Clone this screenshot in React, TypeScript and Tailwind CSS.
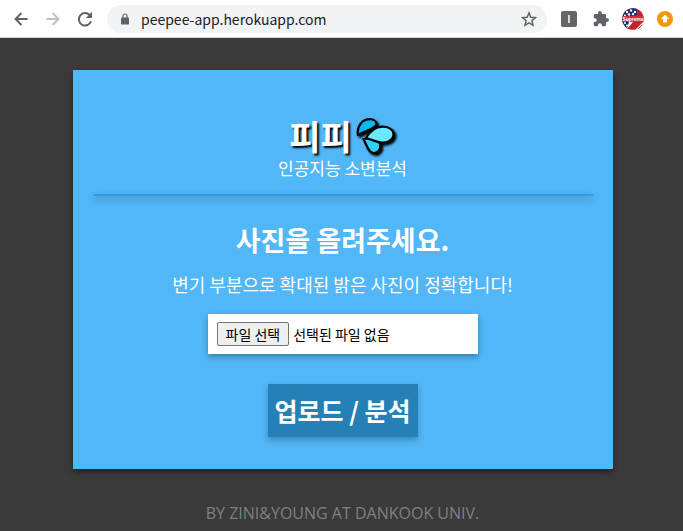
import React from 'react';

function BackIcon({ className }: { className: string }) {
  return (
    <svg viewBox="0 0 16 16" className={className} fill="none" stroke="currentColor" strokeWidth="2.200" aria-hidden="true">
      <path d="M15.500 8H2.500M8.500 1.200L1.800 8l6.700 6.800" />
    </svg>
  );
}

function BrowserBar() {
  return (
    <header className="flex h-[38px] items-center border-b border-[#d5d7da] bg-white pr-2.5 pl-3.5">
      <button type="button" aria-label="뒤로" className="shrink-0 text-[#5f6368]">
        <BackIcon className="size-3.5" />
      </button>
      <button type="button" aria-label="앞으로" disabled className="ml-[18px] shrink-0 text-[#bdc1c6]">
        <BackIcon className="size-3.5 rotate-180" />
      </button>
      <button type="button" aria-label="새로고침" className="ml-[17px] shrink-0 text-[#5f6368]">
        <svg viewBox="0 0 16 16" className="size-4" aria-hidden="true">
          <path d="M14 10.200A6.200 6.200 0 1 1 12.600 4" fill="none" stroke="currentColor" strokeWidth="2" />
          <path d="M15 .8V7H8.800z" fill="currentColor" />
        </svg>
      </button>
      <div className="ml-3.5 flex h-7 min-w-0 flex-1 items-center rounded-full bg-[#f1f3f4] pr-2.5 pl-3.5">
        <svg viewBox="0 0 8 12" className="h-3 w-2 shrink-0" aria-hidden="true">
          <path d="M2 5V3a2 2 0 0 1 4 0v2" fill="none" stroke="#5f6368" strokeWidth="1.200" />
          <rect y="4.500" width="8" height="7" rx=".8" fill="#5f6368" />
        </svg>
        <input
          type="text"
          aria-label="주소"
          defaultValue="peepee-app.herokuapp.com"
          className="ml-3 min-w-0 flex-1 bg-transparent text-sm text-[#202124] outline-none"
        />
        <button type="button" aria-label="북마크" className="shrink-0">
          <svg viewBox="0 0 24 24" className="size-4" fill="none" stroke="#5f6368" strokeWidth="2.200" aria-hidden="true">
            <path d="M12 2.800l2.700 6.500 7 .6-5.300 4.600 1.600 6.900-6-3.700-6 3.700 1.600-6.900L2.300 9.900l7-.6z" />
          </svg>
        </button>
      </div>
      <button type="button" aria-label="확장 프로그램 I" className="ml-3.5 flex size-4 shrink-0 items-center justify-center rounded-xs bg-[#666666]">
        <span className="h-2 w-0.5 bg-[#d8d8d8]" />
      </button>
      <button type="button" aria-label="확장 프로그램" className="ml-4 shrink-0">
        <svg viewBox="1 1 22 22" className="size-4" fill="#5f6368" aria-hidden="true">
          <path d="M20.500 11H19V7a2 2 0 0 0-2-2h-4V3.500a2.500 2.500 0 0 0-5 0V5H4a2 2 0 0 0-2 2v3.800h1.500a2.700 2.700 0 0 1 0 5.400H2V20a2 2 0 0 0 2 2h3.800v-1.500a2.700 2.700 0 0 1 5.400 0V22H17a2 2 0 0 0 2-2v-4h1.500a2.500 2.500 0 0 0 0-5z" />
        </svg>
      </button>
      <button type="button" aria-label="프로필" className="ml-[13px] shrink-0">
        <svg viewBox="0 0 22 22" className="size-[22px]" aria-hidden="true">
          <clipPath id="avatar">
            <circle cx="11" cy="11" r="10.800" />
          </clipPath>
          <g clipPath="url(#avatar)">
            <rect width="22" height="22" fill="#c8202c" />
            <path d="M0 0h15v7L2 9l6 5-2 8H0z" fill="#1c2f6b" />
            <g fill="#ffffff">
              <circle cx="5" cy="4" r="1.200" />
              <circle cx="9" cy="2.500" r="1.200" />
              <circle cx="13" cy="4" r="1.200" />
              <circle cx="7" cy="6.500" r="1.200" />
              <circle cx="11" cy="6" r="1.200" />
              <circle cx="3" cy="7.500" r="1" />
              <circle cx="3" cy="15" r="1" />
              <circle cx="5" cy="17.500" r="1" />
              <path d="M7 14h4l-6 7zM22 13v9h-9z" />
            </g>
            <path d="M21 16l-5 5" stroke="#c8202c" strokeWidth="1" />
            <rect x="1" y="8" width="20" height="6" fill="#d0303b" />
            <text x="11" y="12.800" textAnchor="middle" fontSize="5" fontWeight="700" fontFamily="Liberation Sans, sans-serif" fill="#ffffff">
              Supreme
            </text>
          </g>
        </svg>
      </button>
      <button type="button" aria-label="업데이트" className="ml-[13px] shrink-0">
        <svg viewBox="0 0 16 16" className="size-4" aria-hidden="true">
          <circle cx="8" cy="8" r="8" fill="#f29900" />
          <path d="M8 3.500L12.200 8H10v3.500H6V8H3.800z" fill="#ffffff" />
        </svg>
      </button>
    </header>
  );
}

function Droplets() {
  return (
    <svg viewBox="0 0 40 40" className="size-10 overflow-visible drop-shadow-[2px_2px_1px_#000000]" stroke="#000000" strokeWidth="2.200" strokeLinejoin="round" aria-hidden="true">
      <path d="M1.800 19C.8 10 6 3.300 14 3.200c4 0 6.500 2.300 6.500 5.300C17 14 9 14.500 1.800 19z" fill="#0bb8f3" />
      <path d="M7.300 23c8-1 16 1 17 6 .5 4.500-2.500 8-7 8C12 36.500 11 29 7.300 23z" fill="#2fd0f8" />
      <path d="M10 22c4-7 10-11.500 17-11.300 6.500.3 10.500 3.300 10.500 8C37 25 30 27.300 24 26.300 18 25.500 14.500 23 10 22z" fill="#67e9ff" />
    </svg>
  );
}

export default function App() {
  return (
    <div className="flex min-h-screen flex-col bg-[#3a3a3a] font-['Noto_Sans_CJK_KR',sans-serif]">
      <BrowserBar />
      <div className="flex flex-col items-center pt-8 pl-0.5">
        <main className="flex w-full max-w-[540px] flex-col items-center bg-[#51b7f6] px-5 pt-[46px] pb-8 text-white shadow-[0_3px_6px_rgba(0,0,0,0.4)]">
          <h1 className="flex h-10 items-center gap-1 text-[34px] leading-8 font-bold">
            <span className="[text-shadow:2px_2px_2px_#000000]">피피</span>
            <Droplets />
          </h1>
          <p className="text-[17px] leading-6">인공지능 소변분석</p>
          <hr className="mt-3.5 w-full border-t-2 border-[#3498db] shadow-[0_3px_6px_rgba(0,0,0,0.3)]" />
          <h2 className="mt-6 text-[27px] leading-10 font-bold">사진을 올려주세요.</h2>
          <p className="mt-3 text-lg leading-6">변기 부분으로 확대된 밝은 사진이 정확합니다!</p>
          <form className="mt-[18px] flex w-full flex-col items-center" onSubmit={(e) => e.preventDefault()}>
            <label
              htmlFor="photo"
              className="relative flex h-10 w-full max-w-[270px] items-center gap-1 bg-white px-[9px] text-sm text-black shadow-[0_3px_6px_rgba(0,0,0,0.3)]"
            >
              <span className="flex h-6 items-center rounded-xs border border-[#767676] bg-[#efefef] px-2">파일 선택</span>
              <span>선택된 파일 없음</span>
              <input id="photo" type="file" accept="image/*" className="sr-only" />
            </label>
            <button
              type="submit"
              className="mt-[30px] h-[53px] w-[150px] bg-[#2580b6] text-[25px] font-bold whitespace-nowrap shadow-[0_3px_6px_rgba(0,0,0,0.25)]"
            >
              업로드 / 분석
            </button>
          </form>
        </main>
        <footer className="mt-8 text-center font-['Open_Sans','Noto_Sans',sans-serif] text-base leading-6 text-[#808080]">
          BY ZINI&amp;YOUNG AT DANKOOK UNIV.
        </footer>
      </div>
    </div>
  );
}
